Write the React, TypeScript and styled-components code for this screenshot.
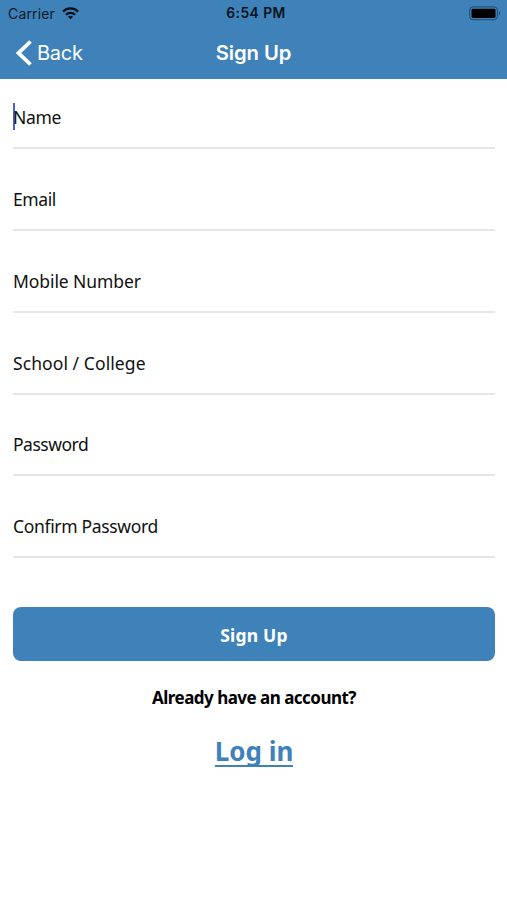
import React from "react";
import styled, { createGlobalStyle } from "styled-components";

const BLUE = "#3e82b9";

const GlobalStyle = createGlobalStyle`
  * { box-sizing: border-box; }
  body { margin: 0; background: #fff; }
`;

const Screen = styled.div`
  width: 507px;
  height: 900px;
  background: #fff;
  color: #111;
  font-family: "Noto Sans", "Open Sans", sans-serif;
  overflow: hidden;
`;

const Header = styled.header`
  height: 79px;
  background: ${BLUE};
  font-family: Inter, "Liberation Sans", sans-serif;
`;

const Bar = styled.div<{ $height: number }>`
  display: grid;
  grid-template-columns: 1fr auto 1fr;
  align-items: center;
  height: ${(p) => p.$height}px;
`;

const Carrier = styled.div`
  display: flex;
  align-items: center;
  gap: 7px;
  padding-left: 8px;
  color: #0a1a26;
  font-size: 14px;
  letter-spacing: 0.15px;
  line-height: 27px;
`;

const Clock = styled.div`
  color: #06121c;
  font-size: 13.8px;
  font-weight: 600;
  letter-spacing: 0.45px;
  line-height: 27px;
  padding-left: 5px;
`;

const BatterySlot = styled.div`
  display: flex;
  justify-content: flex-end;
  padding: 0 6px 1px 0;
`;

const BackButton = styled.button`
  display: flex;
  align-items: center;
  gap: 5px;
  padding: 0 0 0 16px;
  border: 0;
  background: none;
  color: #fff;
  font: 400 20px/50px Inter, sans-serif;
  letter-spacing: -0.25px;
`;

const Title = styled.h1`
  margin: 0;
  color: #fff;
  font-size: 20.3px;
  font-weight: 600;
  line-height: 50px;
  letter-spacing: -0.1px;
`;

const Form = styled.form`
  display: flex;
  flex-direction: column;
  padding: 0 12px 0 13px;
`;

const Field = styled.label<{ $spacing: number }>`
  display: flex;
  align-items: flex-end;
  height: 81.8px;
  padding-bottom: 18px;
  border-bottom: 2px solid #e6e6e6;
  font-size: 17.5px;
  line-height: 24px;
  letter-spacing: ${(p) => p.$spacing}px;
  white-space: nowrap;

  &:first-child { height: 70.3px; }
`;

const Caret = styled.span`
  width: 2px;
  height: 27px;
  margin: 0 -2px -1px 0;
  background: #4560d8;
`;

const Submit = styled.button`
  height: 54px;
  margin-top: 48.7px;
  padding: 2px 0 0;
  border: 0;
  border-radius: 8px;
  background: ${BLUE};
  color: #fff;
  font: 700 17.5px/24px "Noto Sans", sans-serif;
  letter-spacing: 0.2px;
`;

const Prompt = styled.p`
  margin: 25px 0 0;
  color: #000;
  font-size: 17px;
  font-weight: 700;
  line-height: 24px;
  letter-spacing: -0.52px;
  text-align: center;
`;

const LoginLink = styled.a`
  align-self: center;
  margin-top: 28px;
  border-bottom: 2px solid ${BLUE};
  color: ${BLUE};
  font-size: 26px;
  font-weight: 700;
  line-height: 27px;
`;

const fields = [
  { label: "Name", spacing: -0.3, active: true },
  { label: "Email", spacing: -0.4 },
  { label: "Mobile Number", spacing: -0.08 },
  { label: "School / College", spacing: 0.08 },
  { label: "Password", spacing: -0.5 },
  { label: "Confirm Password", spacing: -0.33 },
];

const WifiIcon = () => (
  <svg width="17" height="13" viewBox="0 0 17 13" fill="none" stroke="#06121c" strokeWidth="2.3">
    <path d="M1 4.6C5.1.4 11.9.4 16 4.6" />
    <path d="M3.9 7.7C6.4 5.2 10.6 5.2 13.1 7.7" />
    <path d="M8.5 12.3L5.9 9.7C7.3 8.3 9.7 8.3 11.1 9.7Z" fill="#06121c" stroke="none" />
  </svg>
);

const BatteryIcon = () => (
  <svg width="32" height="15" viewBox="0 0 32 15">
    <rect x="0.7" y="0.9" width="27.6" height="12.8" rx="3.2" fill="none" stroke="#204a6b" strokeWidth="1" />
    <rect x="2.5" y="2.7" width="24" height="9.2" rx="1.4" fill="#000" />
    <path d="M29.8 5.2C31.6 5.8 31.6 8.8 29.8 9.4Z" fill="#204a6b" />
  </svg>
);

const BackIcon = () => (
  <svg width="16" height="26" viewBox="0 0 16 26" fill="none" stroke="#fff" strokeWidth="3.8">
    <path d="M14.5 1.5L2.6 13L14.5 24.5" />
  </svg>
);

export default function App() {
  return (
    <Screen>
      <GlobalStyle />
      <Header>
        <Bar $height={27}>
          <Carrier>Carrier <WifiIcon /></Carrier>
          <Clock>6:54 PM</Clock>
          <BatterySlot><BatteryIcon /></BatterySlot>
        </Bar>
        <Bar $height={51}>
          <BackButton type="button"><BackIcon />Back</BackButton>
          <Title>Sign Up</Title>
        </Bar>
      </Header>
      <Form>
        {fields.map((f) => (
          <Field key={f.label} $spacing={f.spacing}>
            {f.active && <Caret />}
            {f.label}
          </Field>
        ))}
        <Submit type="button">Sign Up</Submit>
        <Prompt>Already have an account?</Prompt>
        <LoginLink>Log in</LoginLink>
      </Form>
    </Screen>
  );
}
